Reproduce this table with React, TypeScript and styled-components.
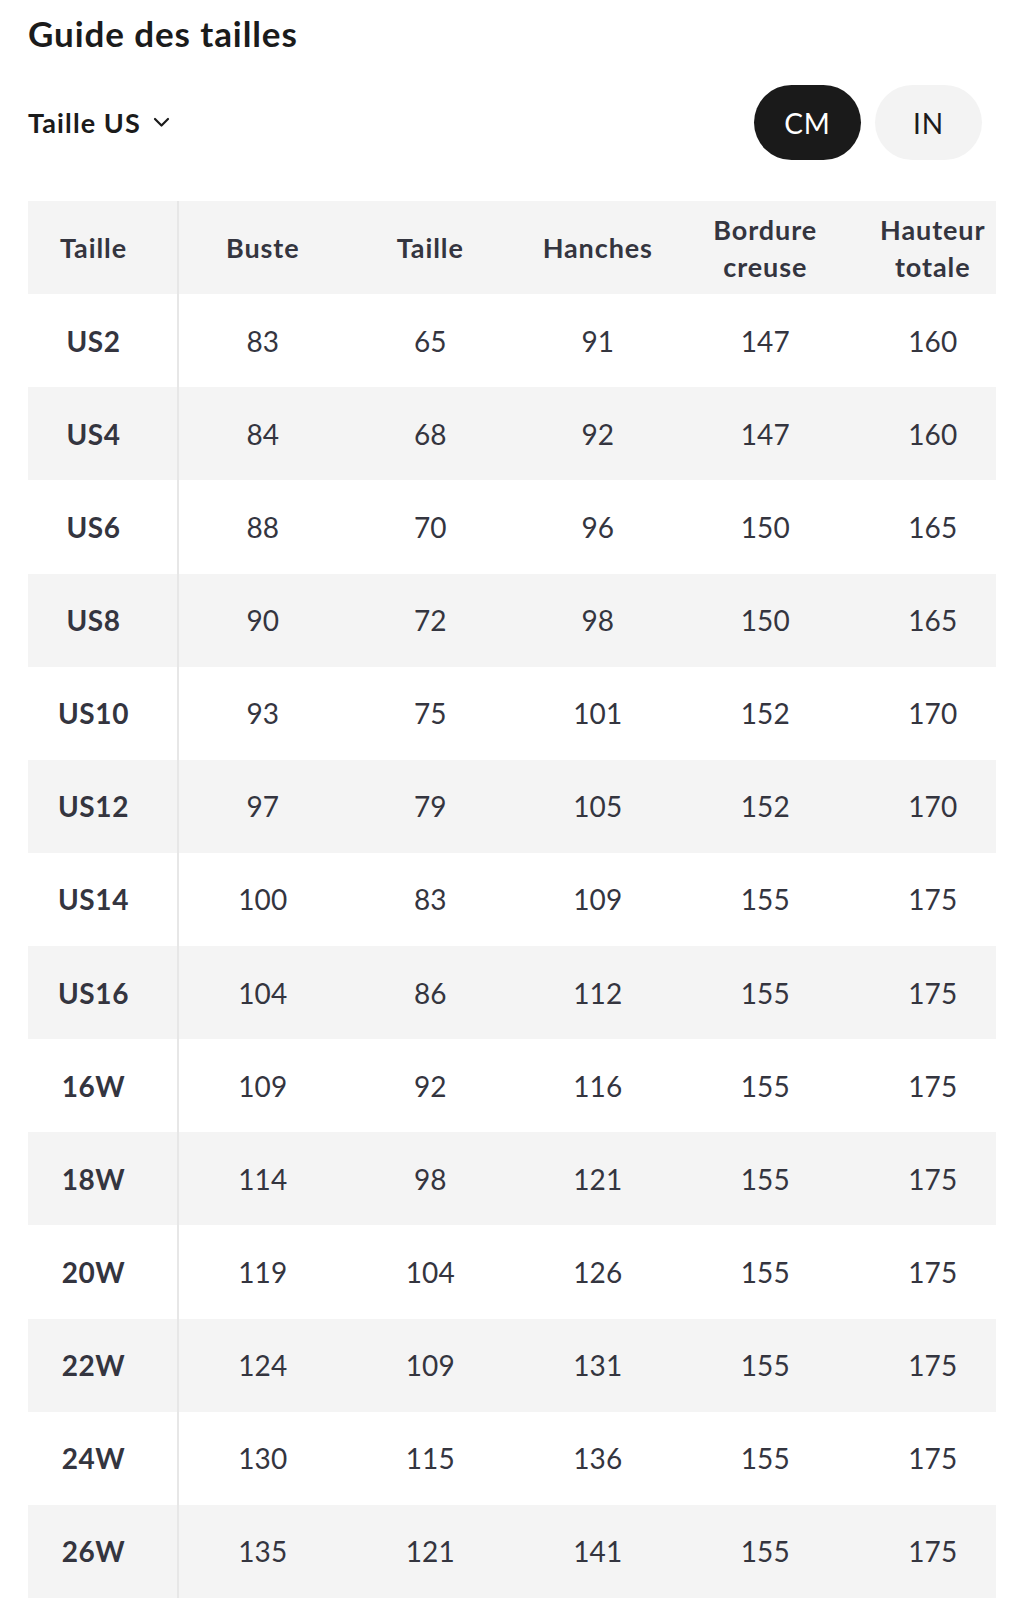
import React from "react";
import styled, { createGlobalStyle } from "styled-components";

const GlobalStyle = createGlobalStyle`
  html, body { margin: 0; padding: 0; background: #ffffff; }
  body { font-family: Lato, "Noto Sans", sans-serif; -webkit-font-smoothing: antialiased; }
  * { box-sizing: border-box; }
`;

const Page = styled.div`
  width: 1024px;
  padding: 12px 28px 0 28px;
`;

const Title = styled.h1`
  margin: 0;
  font-family: Lato, sans-serif;
  font-weight: 700;
  font-size: 35px;
  line-height: 42px;
  color: #1b1b1b;
  letter-spacing: 0.9px;
`;

const Controls = styled.div`
  margin-top: 31px;
  height: 75px;
  display: flex;
  align-items: center;
  justify-content: space-between;
  padding-right: 14px;
`;

const Dropdown = styled.button`
  display: flex;
  align-items: center;
  gap: 12px;
  padding: 0;
  border: 0;
  background: transparent;
  font-family: Lato, sans-serif;
  font-weight: 700;
  font-size: 27px;
  letter-spacing: 1.1px;
  color: #1b1b1b;
  cursor: pointer;
`;

const UnitGroup = styled.div`
  display: flex;
  gap: 14px;
`;

const UnitButton = styled.button<{ $active?: boolean }>`
  width: 107px;
  height: 75px;
  border-radius: 38px;
  border: 0;
  background: ${(p) => (p.$active ? "#1a1a1a" : "#f3f3f3")};
  color: ${(p) => (p.$active ? "#ffffff" : "#1b1b1b")};
  font-family: Lato, sans-serif;
  font-weight: 400;
  font-size: 28px;
  letter-spacing: 1px;
  display: flex;
  align-items: center;
  justify-content: center;
  cursor: pointer;
`;

const TableFrame = styled.div`
  margin-top: 41px;
  width: 968px;
  overflow: hidden;
`;

const Row = styled.div<{ $shaded?: boolean }>`
  display: grid;
  grid-template-columns: 151px repeat(5, 167.5px);
  width: max-content;
  height: 93.14px;
  background: ${(p) => (p.$shaded ? "#f4f4f4" : "#ffffff")};
  color: #34353f;
`;

const Cell = styled.div<{ $head?: boolean }>`
  display: flex;
  align-items: center;
  justify-content: center;
  text-align: center;
  font-family: Lato, sans-serif;
  font-weight: ${(p) => (p.$head ? 700 : 400)};
  font-size: ${(p) => (p.$head ? "27px" : "28px")};
  line-height: ${(p) => (p.$head ? "37px" : "normal")};
  letter-spacing: ${(p) => (p.$head ? "0.9px" : "0.1px")};
`;

const SizeCell = styled(Cell)`
  padding-right: 18px;
  border-right: 2px solid #e7e7e7;
  font-weight: 700;
  font-size: ${(p) => (p.$head ? "27px" : "28px")};
  letter-spacing: ${(p) => (p.$head ? "0.9px" : "0.6px")};
`;

const headers = ["Buste", "Taille", "Hanches", "Bordure\ncreuse", "Hauteur\ntotale"];

const rows: [string, number, number, number, number, number][] = [
  ["US2", 83, 65, 91, 147, 160],
  ["US4", 84, 68, 92, 147, 160],
  ["US6", 88, 70, 96, 150, 165],
  ["US8", 90, 72, 98, 150, 165],
  ["US10", 93, 75, 101, 152, 170],
  ["US12", 97, 79, 105, 152, 170],
  ["US14", 100, 83, 109, 155, 175],
  ["US16", 104, 86, 112, 155, 175],
  ["16W", 109, 92, 116, 155, 175],
  ["18W", 114, 98, 121, 155, 175],
  ["20W", 119, 104, 126, 155, 175],
  ["22W", 124, 109, 131, 155, 175],
  ["24W", 130, 115, 136, 155, 175],
  ["26W", 135, 121, 141, 155, 175],
];

const Chevron = () => (
  <svg width="17" height="11" viewBox="0 0 17 11" fill="none">
    <polyline points="2,2 8.5,8.5 15,2" stroke="#1b1b1b" strokeWidth="2.2" strokeLinecap="round" strokeLinejoin="round" />
  </svg>
);

export default function App() {
  return (
    <Page>
      <GlobalStyle />
      <Title>Guide des tailles</Title>
      <Controls>
        <Dropdown>
          Taille US
          <Chevron />
        </Dropdown>
        <UnitGroup>
          <UnitButton $active>CM</UnitButton>
          <UnitButton>IN</UnitButton>
        </UnitGroup>
      </Controls>
      <TableFrame>
        <Row $shaded>
          <SizeCell $head>Taille</SizeCell>
          {headers.map((h) => (
            <Cell $head key={h}>
              <span>
                {h.split("\n").map((line, i) => (
                  <React.Fragment key={i}>
                    {i > 0 && <br />}
                    {line}
                  </React.Fragment>
                ))}
              </span>
            </Cell>
          ))}
        </Row>
        {rows.map((r, i) => (
          <Row key={r[0]} $shaded={i % 2 === 1}>
            <SizeCell>{r[0]}</SizeCell>
            {r.slice(1).map((v, j) => (
              <Cell key={j}>{v}</Cell>
            ))}
          </Row>
        ))}
      </TableFrame>
    </Page>
  );
}
